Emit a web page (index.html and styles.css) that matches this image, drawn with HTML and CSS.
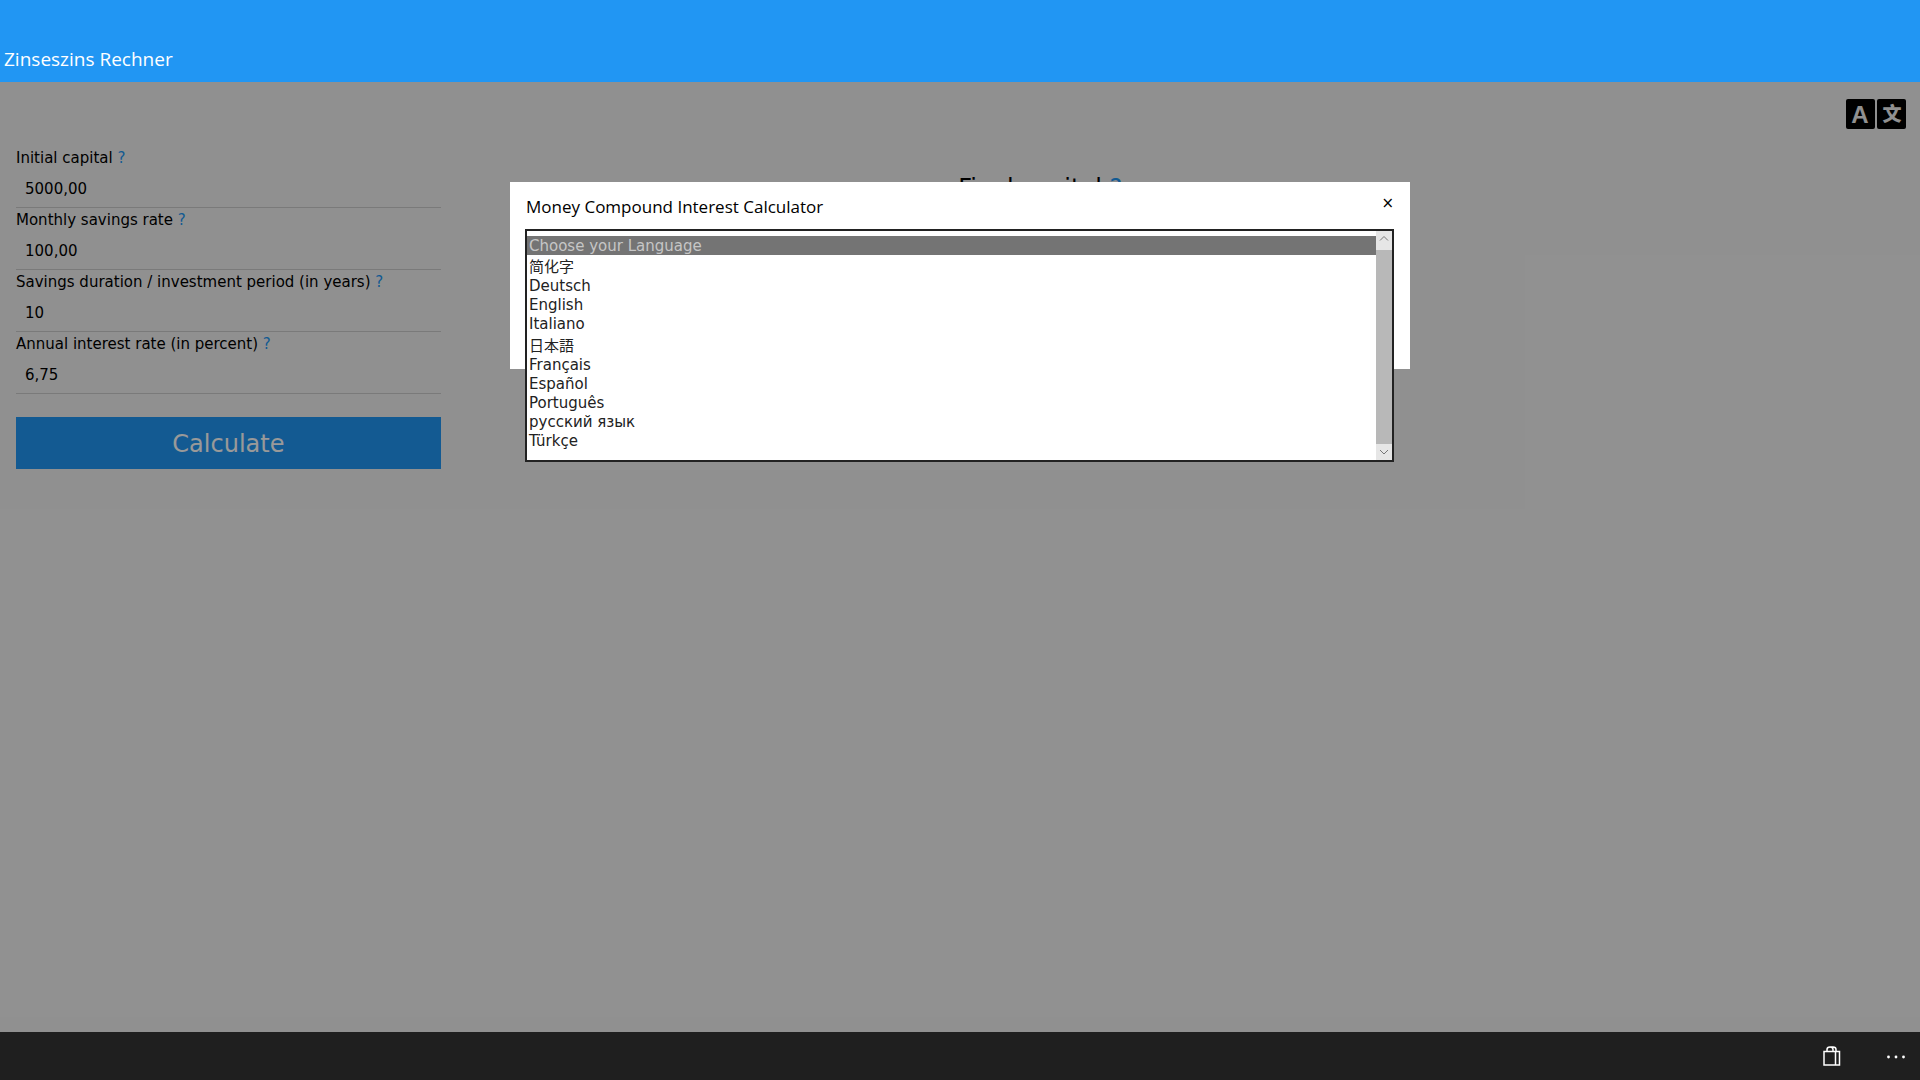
FILE: index.html
```html
<!DOCTYPE html>
<html lang="en">

<head>
    <title>Zinseszins Rechner</title>
    <meta charset="UTF-8">
    <meta name="viewport" content="width=device-width, initial-scale=1">
    <link rel="stylesheet" href="styles.css">
</head>

<body>
    <header class="titlebar">Zinseszins Rechner</header>

    <div class="view">
        <!-- calculator -->
        <main class="page">
            <div class="toolbar">
                <button class="lang-btn" type="button" aria-label="Language">
                    <svg width="60" height="30" viewBox="0 0 60 30">
                        <rect width="29" height="30" rx="2" />
                        <rect x="31" width="29" height="30" rx="2" />
                        <text class="lang-a" x="14" y="24">A</text>
                        <text class="lang-zh" x="46" y="22">文</text>
                    </svg>
                </button>
            </div>
            <div class="columns">
                <form class="inputs">
                    <div class="label-row"><label for="capital">Initial capital</label> <a href="#">?</a></div>
                    <input id="capital" type="text" value="5000,00">
                    <div class="label-row"><label for="rate">Monthly savings rate</label> <a href="#">?</a></div>
                    <input id="rate" type="text" value="100,00">
                    <div class="label-row"><label for="years">Savings duration / investment period (in years)</label> <a href="#">?</a></div>
                    <input id="years" type="text" value="10">
                    <div class="label-row"><label for="interest">Annual interest rate (in percent)</label> <a href="#">?</a></div>
                    <input id="interest" type="text" value="6,75">
                    <button class="calc-btn" type="button">Calculate</button>
                </form>
                <section class="result">
                    <h3>Final capital <a href="#">?</a></h3>
                </section>
            </div>
        </main>

        <!-- language dialog -->
        <div class="modal">
            <div class="dialog" role="dialog" aria-labelledby="dialog-title">
                <div class="dialog-head">
                    <h4 id="dialog-title">Money Compound Interest Calculator</h4>
                    <button class="close-btn" type="button" aria-label="Close">×</button>
                </div>
                <div class="picker">
                    <div class="dropdown">
                        <select class="languages" size="11" aria-label="Choose your Language">
                            <option class="placeholder" disabled selected>Choose your Language</option>
                            <option class="cjk" lang="zh">简化字</option>
                            <option>Deutsch</option>
                            <option>English</option>
                            <option>Italiano</option>
                            <option class="cjk" lang="ja">日本語</option>
                            <option>Français</option>
                            <option>Español</option>
                            <option>Português</option>
                            <option>русский язык</option>
                            <option>Türkçe</option>
                        </select>
                        <div class="scrollbar">
                            <svg width="16" height="16" viewBox="0 0 16 16"><path d="M4 9.500l4-4 4 4" /></svg>
                            <div class="thumb"></div>
                            <svg width="16" height="16" viewBox="0 0 16 16"><path d="M4 6l4 4 4-4" /></svg>
                        </div>
                    </div>
                </div>
            </div>
        </div>
    </div>

    <footer class="appbar">
        <button type="button" aria-label="Store">
            <svg width="18" height="20" viewBox="0 0 18 20">
                <path d="M1 5.500h15.500v13.500h-15.500zM12.500 5.500v13.500" />
                <path d="M4 5.500v-2q0-2.500 3-2.500t3 2.500v2M7 1h3q3 0 3 2.500v2" />
            </svg>
        </button>
        <button type="button" aria-label="More">
            <svg width="20" height="20" viewBox="0 0 20 20">
                <g class="dots">
                    <circle cx="2.500" cy="11" r="1.400" />
                    <circle cx="10" cy="11" r="1.400" />
                    <circle cx="17.500" cy="11" r="1.400" />
                </g>
            </svg>
        </button>
    </footer>
</body>

</html>
```

FILE: styles.css
```css
* {
    box-sizing: border-box;
}

body {
    margin: 0;
    height: 100vh;
    display: flex;
    flex-direction: column;
    background: #f1f1f1;
    color: #000;
    font-family: Verdana, "DejaVu Sans", "Noto Sans CJK SC", sans-serif;
    font-size: 15px;
    line-height: 24px;
}

button,
input,
select {
    font: inherit;
    color: inherit;
}

button {
    padding: 0;
    border: none;
    background: none;
}

h3,
h4 {
    margin: 0;
    font-weight: 400;
}

a {
    color: #2196f3;
    text-decoration: none;
}

.titlebar {
    padding: 46px 4px 10px;
    background: #2196f3;
    color: #fff;
    font-family: "Segoe UI", "Open Sans", sans-serif;
    font-size: 19px;
    line-height: 26px;
}

.view {
    position: relative;
    flex: 1;
}

/* calculator */
.page {
    padding: 17px 16px;
}

.toolbar {
    display: flex;
    justify-content: flex-end;
    height: 47px;
}

.lang-btn {
    width: 60px;
    height: 30px;
    margin-right: -2px;
}

.lang-btn svg,
.appbar svg,
.scrollbar svg {
    display: block;
}

.lang-btn text {
    fill: #f1f1f1;
    text-anchor: middle;
    font-weight: 700;
}

.lang-a {
    font-family: "Liberation Sans", sans-serif;
    font-size: 24px;
}

.lang-btn .lang-zh {
    font-family: "Noto Sans CJK SC", sans-serif;
    font-size: 19px;
    font-weight: 900;
}

.columns {
    display: flex;
}

.inputs {
    flex: 0 0 22.5%;
}

.inputs input {
    display: block;
    width: 100%;
    height: 38px;
    padding: 8px 9px;
    border: none;
    border-bottom: 1px solid #ccc;
    background: none;
}

.calc-btn {
    width: 100%;
    margin-top: 23px;
    padding: 9px 16px 7px;
    background: #2196f3;
    color: #fff;
    font-size: 24px;
    line-height: 36px;
}

.result {
    flex: 0 0 63.5%;
    padding-top: 24px;
    text-align: center;
}

.result h3 {
    font-size: 24px;
    line-height: 36px;
}

/* language dialog */
.modal {
    position: absolute;
    inset: 0;
    padding-top: 100px;
    background: rgba(0, 0, 0, 0.4);
}

.dialog {
    max-width: 900px;
    margin: 0 auto;
    padding: 0 16px 16px;
    background: #fff;
}

.dialog-head {
    display: flex;
    justify-content: space-between;
    align-items: flex-start;
    padding: 9px 0;
}

.dialog-head h4 {
    padding-top: 3px;
    font-family: "Segoe UI", "Open Sans", sans-serif;
    font-size: 17px;
    line-height: 26px;
}

.close-btn {
    padding: 0 0 0 16px;
}

.picker {
    position: relative;
    height: 124px;
}

/* open list hangs over the bottom of the dialog */
.dropdown {
    position: absolute;
    top: 0;
    left: -1px;
    right: 0;
    display: flex;
    border: 2px solid #222;
    background: #fff;
}

.languages {
    flex: 1;
    height: 229px;
    padding: 5px 0 0;
    border: none;
    border-radius: 0;
    outline: none;
    background: #fff;
    color: #222;
    overflow: hidden;
}

.languages option {
    min-height: 19px;
    padding: 0 2px;
    line-height: 19px;
}

.languages .cjk {
    padding-bottom: 1px;
    line-height: 20px;
}

.languages .placeholder {
    padding-top: 1px;
    background: #747474 linear-gradient(#747474, #747474);
    color: #c6c6c6;
}

.scrollbar {
    display: flex;
    flex-direction: column;
    width: 16px;
    background: #e6e6e6;
}

.thumb {
    flex: 1;
    margin-top: 3px;
    background: #b8b8b8;
}

.scrollbar path {
    fill: none;
    stroke: #777;
}

/* bottom command bar */
.appbar {
    display: flex;
    justify-content: flex-end;
    align-items: center;
    gap: 45px;
    height: 48px;
    padding: 0 14px;
    background: #1f1f1f;
}

.appbar path {
    fill: none;
    stroke: #fff;
    stroke-width: 1.5;
}

.dots {
    fill: #fff;
}
```
